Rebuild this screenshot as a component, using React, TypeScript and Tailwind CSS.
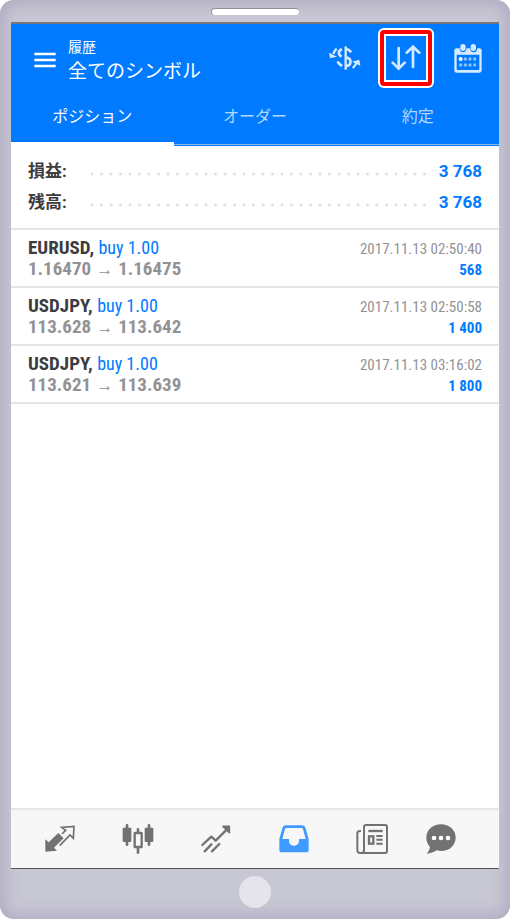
import React, { useState } from 'react';
import clsx from 'clsx';

type Deal = {
  symbol: string;
  side: string;
  open: string;
  close: string;
  time: string;
  profit: string;
};

const tabs = ['ポジション', 'オーダー', '約定'];

const totals = [
  { label: '損益:', value: '3 768' },
  { label: '残高:', value: '3 768' },
];

const deals: Deal[] = [
  { symbol: 'EURUSD,', side: 'buy 1.00', open: '1.16470', close: '1.16475', time: '2017.11.13 02:50:40', profit: '568' },
  { symbol: 'USDJPY,', side: 'buy 1.00', open: '113.628', close: '113.642', time: '2017.11.13 02:50:58', profit: '1 400' },
  { symbol: 'USDJPY,', side: 'buy 1.00', open: '113.621', close: '113.639', time: '2017.11.13 03:16:02', profit: '1 800' },
];

const MenuIcon = () => (
  <svg width="22" height="18" viewBox="0 0 66 54" fill="none" stroke="currentColor" strokeWidth="7">
    <path d="M1 6h64M1 24h64M1 42h64" />
  </svg>
);

const CurrencyIcon = () => (
  <svg width="32" height="26" viewBox="0 0 96 78" fill="none" stroke="currentColor">
    {/* dollar sign, split by the bar */}
    <path d="M50 4v70" strokeWidth="7" />
    <path d="M50 12c8 1 13 4 16 10M39 13c-12 4-13 15-1 22M51 37c18 3 18 24 0 27" strokeWidth="8" />
    <path d="M26 49c2 6 7 11 14 13" strokeWidth="8" />
    <path d="M23 11c-6 4-8 9-10 16" strokeWidth="7" />
    <path d="M0 23l3 17 21-5z" fill="currentColor" stroke="none" />
    <path d="M71 69c6-4 9-9 11-15" strokeWidth="7" />
    <path d="M69 50l22-6 3 18z" fill="currentColor" stroke="none" />
  </svg>
);

const SortIcon = () => (
  <svg width="30" height="26" viewBox="0 0 90 78" fill="none" stroke="currentColor" strokeWidth="8" strokeLinecap="round">
    <path d="M23 9v62M5 53l18 18 18-18" />
    <path d="M66 66V5M47 23L66 5l19 18" />
  </svg>
);

const CalendarIcon = () => (
  <svg width="28" height="30" viewBox="0 0 84 90" fill="currentColor">
    <path
      fillRule="evenodd"
      d="M7 16h10c1 9 5 12 10 12s10-3 11-12h10c1 9 5 12 11 12s10-3 11-12h7c3 0 6 3 6 6v60c0 4-3 7-7 7H8c-4 0-7-3-7-7V22c0-3 3-6 6-6zm1 19v43c0 2 1 3 3 3h62c2 0 3-1 3-3V35z"
    />
    <rect x="19" y="3" width="16" height="21" rx="8" />
    <rect x="50" y="3" width="16" height="21" rx="8" />
    <circle cx="20" cy="48" r="6" fill="#fff" />
    {[34, 48, 62].map((x) => (
      <circle key={x} cx={x} cy="48" r="5" opacity="0.65" />
    ))}
    {[20, 34, 48, 62].map((x) => (
      <circle key={x} cx={x} cy="66" r="5" opacity="0.65" />
    ))}
  </svg>
);

const QuotesIcon = () => (
  <svg width="30" height="28" viewBox="0 0 90 84" fill="none" stroke="currentColor" strokeWidth="5">
    <path d="M1 80V43l10 9 29-28 16 16-29 28 9 9z" fill="currentColor" stroke="none" />
    <path d="M51 27l11-11-12-9 37-3-2 36-10-10-31 32" />
  </svg>
);

const CandlesIcon = () => (
  <svg width="32" height="32" viewBox="0 0 96 96" fill="none" stroke="currentColor">
    <path d="M15 7v58M81 7v58" strokeWidth="8" strokeLinecap="round" />
    <rect x="2" y="14" width="26" height="43" rx="3" fill="currentColor" stroke="none" />
    <rect x="68" y="14" width="26" height="43" rx="3" fill="currentColor" stroke="none" />
    <path d="M48 19v10M48 76v13" strokeWidth="8" strokeLinecap="round" />
    <rect x="38" y="30" width="21" height="42" rx="1" strokeWidth="7" />
  </svg>
);

const TrendIcon = () => (
  <svg width="30" height="28" viewBox="0 0 90 84" fill="none" stroke="currentColor" strokeWidth="7" strokeLinecap="round">
    <path d="M4 60l27-25 13 12 36-36" strokeLinejoin="round" />
    <path d="M66 4h19v19L66 4z" fill="currentColor" strokeWidth="5" strokeLinejoin="round" />
    <path d="M11 79l20-21M33 79l22-22" />
  </svg>
);

const InboxIcon = () => (
  <svg width="30" height="28" viewBox="0 0 90 84" fill="currentColor">
    <path
      fillRule="evenodd"
      d="M20 1h50c4 0 7 2 9 6l9 31c1 3 1 5 1 8v29c0 5-2 7-7 7H8c-5 0-7-2-7-7V46c0-3 0-5 1-8l9-31c2-4 5-6 9-6zm2 8c-2 0-3 1-4 3L10 42h20v5c0 20 30 20 30 0v-5h20l-8-30c-1-2-2-3-4-3z"
    />
  </svg>
);

const NewsIcon = () => (
  <svg width="32" height="30" viewBox="0 0 96 90" fill="none" stroke="currentColor" strokeWidth="6">
    <path d="M15 21h-3c-5 0-8 3-8 7v51c0 5 3 8 8 8h75c4 0 6-2 6-6V9c0-4-2-6-6-6H30c-4 0-6 2-6 6v69c0 5-3 9-8 9" />
    <path d="M37 21h43" strokeWidth="7" />
    <rect x="39" y="37" width="13" height="22" strokeWidth="7" />
    <path d="M61 36h19M61 47h19M61 59h19" strokeWidth="6" />
  </svg>
);

const ChatIcon = () => (
  <svg width="30" height="30" viewBox="0 0 90 90" fill="currentColor">
    <path d="M45 1c25 0 44 17 44 40S70 81 45 81c-5 0-9-1-13-2-8 6-18 9-30 10 5-5 9-11 10-20C5 61 1 52 1 41 1 18 20 1 45 1z" />
    <g fill="#fff">
      <circle cx="24" cy="42" r="7" />
      <circle cx="45" cy="42" r="7" />
      <circle cx="66" cy="42" r="7" />
    </g>
  </svg>
);

const navItems = [
  { name: 'Quotes', icon: <QuotesIcon /> },
  { name: 'Charts', icon: <CandlesIcon /> },
  { name: 'Trade', icon: <TrendIcon /> },
  { name: 'History', icon: <InboxIcon /> },
  { name: 'News', icon: <NewsIcon /> },
  { name: 'Chat', icon: <ChatIcon /> },
];

function Header({ active, onSelect }: { active: string; onSelect: (tab: string) => void }) {
  return (
    <header className="bg-[#007aff] text-white">
      <div className="flex h-[68px] items-center pr-[17px] pl-[23px]">
        <button aria-label="Menu" className="pt-[6px]">
          <MenuIcon />
        </button>
        <div className="ml-3 flex-1 pt-[6px]">
          <p className="text-[14px] leading-[22px]">履歴</p>
          <h1 className="text-[19px] leading-7">全てのシンボル</h1>
        </div>
        <div className="flex items-center text-[#d6eaff]">
          <button aria-label="Currency" className="mr-[17px]">
            <CurrencyIcon />
          </button>
          {/* highlighted control */}
          <button aria-label="Sort" className="mr-5 rounded-md bg-white p-[2px]">
            <span className="block rounded-[4px] bg-[#ff0000] p-1">
              <span className="block bg-white p-[2px]">
                <span className="flex h-11 w-10 items-center justify-center bg-[#007aff]">
                  <SortIcon />
                </span>
              </span>
            </span>
          </button>
          <button aria-label="Calendar">
            <CalendarIcon />
          </button>
        </div>
      </div>
      <div role="tablist" className="grid grid-cols-3">
        {tabs.map((tab) => (
          <button
            key={tab}
            role="tab"
            aria-selected={active === tab}
            onClick={() => onSelect(tab)}
            className={clsx('flex flex-col text-[16px]', active === tab ? 'text-white' : 'text-[#b3d7ff]')}
          >
            <span className="flex h-[50px] w-full items-center justify-center">{tab}</span>
            {active === tab ? (
              <span className="h-1 w-full bg-white" />
            ) : (
              <span className="mt-[2px] h-[2px] w-full border-t border-[#8cb8e8]" />
            )}
          </button>
        ))}
      </div>
    </header>
  );
}

function DealRow({ deal }: { deal: Deal }) {
  return (
    <li className="flex justify-between border-b-2 border-[#e6e6e8] px-[17px] py-[7px] font-['Roboto_Condensed','Liberation_Sans_Narrow',sans-serif]">
      <div>
        <p className="h-[21px] text-[19px] leading-[21px] font-bold text-[#3c3c3e]">
          {deal.symbol} <span className="text-[18px] font-normal text-[#007aff]">{deal.side}</span>
        </p>
        <p className="flex h-[21px] items-center gap-[5px] text-[19px] leading-[21px] font-bold text-[#929296]">
          <span>{deal.open}</span>
          <span className="pt-[2px] font-['Liberation_Sans'] text-[17px] leading-4 font-normal">→</span>
          <span>{deal.close}</span>
        </p>
      </div>
      <div className="pt-[2px] text-right text-[15px] leading-[21px]">
        <p className="h-[21px] text-[#929296]">{deal.time}</p>
        <p className="h-[19px] font-bold text-[#007aff]">{deal.profit}</p>
      </div>
    </li>
  );
}

export default function App() {
  const [active, setActive] = useState(tabs[0]);

  return (
    <div className="bg-white font-[Roboto,'Noto_Sans_CJK_JP',sans-serif]">
      <div className="flex min-h-screen flex-col rounded-[14px] bg-[#c8c7d4] px-[11px] shadow-[inset_0_0_16px_4px_#aeabc1]">
        <div className="flex h-[22px] justify-center pt-2">
          <span className="h-[7px] w-[88px] rounded-sm border-t border-l border-[#8f8f94] bg-white" />
        </div>
        <main className="flex flex-1 flex-col border-t-2 border-b border-t-[#77777a] border-b-[#555] bg-white">
          <Header active={active} onSelect={setActive} />

          <dl className="border-b-2 border-[#e6e6e8] px-[17px] py-[10px]">
            {totals.map((row) => (
              <div key={row.label} className="flex h-[31px] items-center">
                <dt className="w-[60px] text-[17px] font-bold text-[#3c3c3e]">{row.label}</dt>
                <dd className="flex flex-1 items-center justify-between">
                  <svg className="mt-1 mr-3 h-1 min-w-0 flex-1" aria-hidden="true">
                    <line x1="4" y1="2" x2="100%" y2="2" stroke="#e0e0e2" strokeWidth="3" strokeLinecap="round" strokeDasharray="0 9.5" />
                  </svg>
                  <span className="text-[17px] font-bold text-[#007aff]">{row.value}</span>
                </dd>
              </div>
            ))}
          </dl>

          <ul className="flex-1">
            {deals.map((deal) => (
              <DealRow key={deal.time} deal={deal} />
            ))}
          </ul>

          <nav className="grid grid-cols-[78fr_78fr_78fr_78fr_78fr_60fr] border-t-2 border-[#e6e6e8] bg-[#f7f7f8] pr-7 pl-[10px]">
            {navItems.map((item) => (
              <button
                key={item.name}
                aria-label={item.name}
                className={clsx('flex h-[58px] items-center justify-center', item.name === 'History' ? 'text-[#3f9bff]' : 'text-[#727272]')}
              >
                {item.icon}
              </button>
            ))}
          </nav>
        </main>
        <div className="flex h-[50px] justify-center pt-[7px]">
          <button aria-label="Home" className="h-8 w-8 rounded-full bg-[#e4e4ea]" />
        </div>
      </div>
    </div>
  );
}
